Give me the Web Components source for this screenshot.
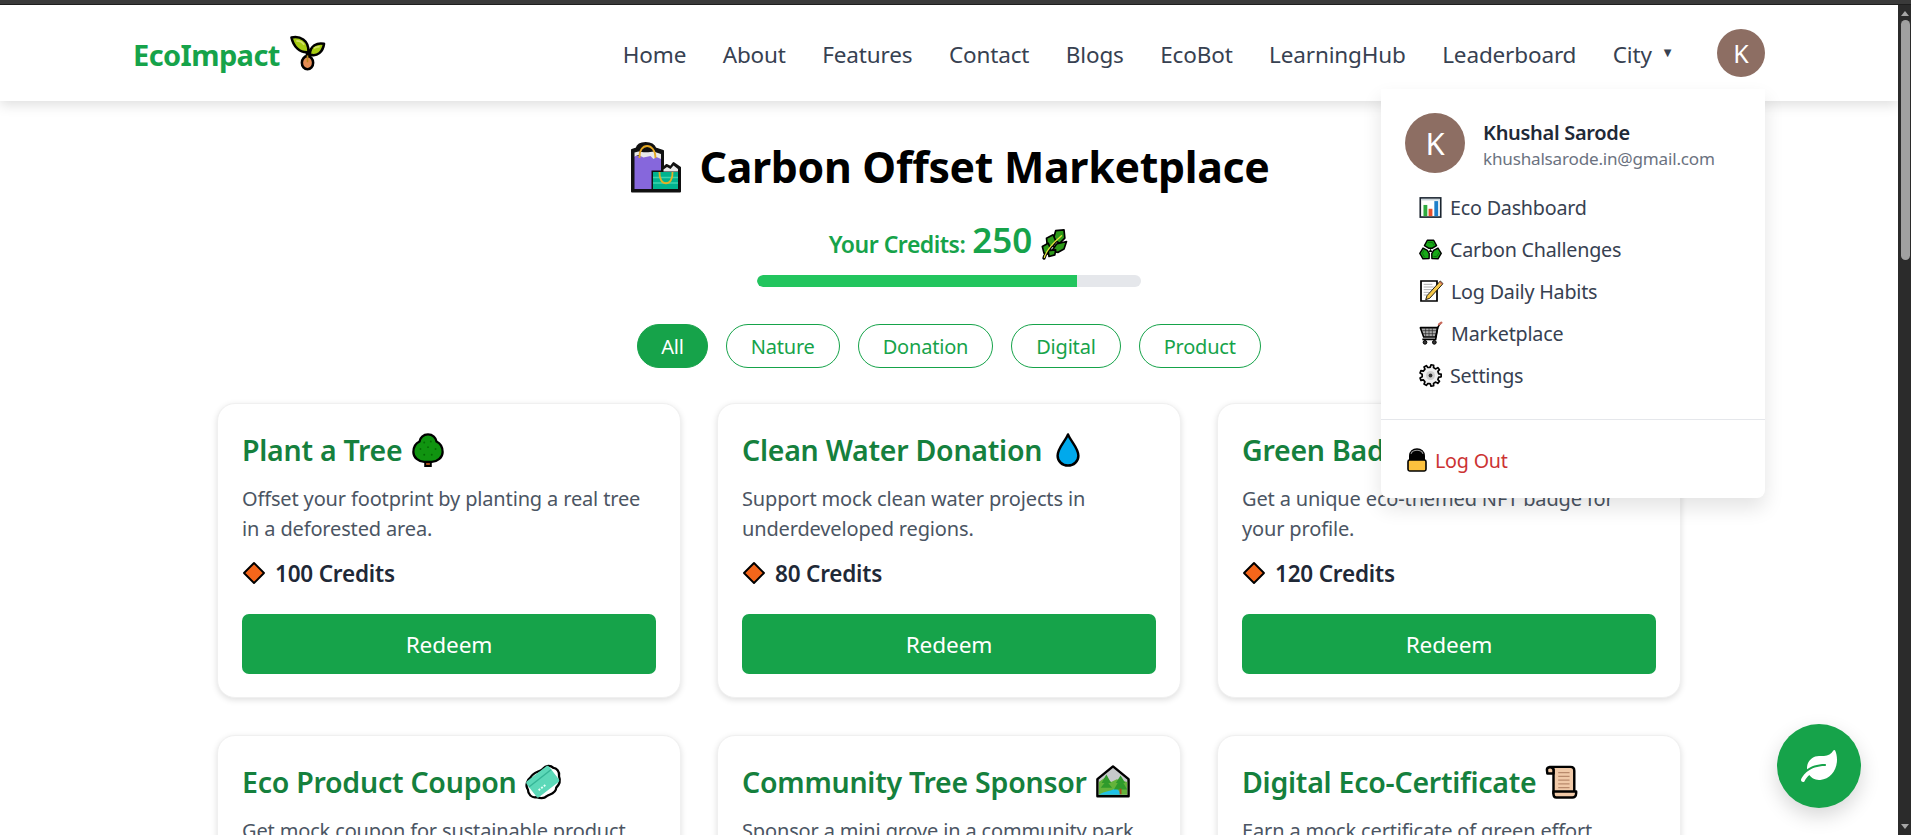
<!DOCTYPE html>
<html lang="en"><head><meta charset="utf-8"><title>EcoImpact</title>
<style>
html,body{margin:0;padding:0;height:100%;overflow:hidden;background:#fff;font-family:"Noto Sans","Open Sans",sans-serif}
</style></head><body>
<eco-app>
  <eco-nav></eco-nav>
  <eco-hero></eco-hero>
  <eco-grid>
    <eco-card icon="tree" credits="100 Credits"><span slot="title">Plant a Tree</span>Offset your footprint by planting a real tree in a deforested area.</eco-card>
    <eco-card icon="drop" credits="80 Credits"><span slot="title">Clean Water Donation</span>Support mock clean water projects in underdeveloped regions.</eco-card>
    <eco-card icon="medal" credits="120 Credits"><span slot="title">Green Badge NFT</span>Get a unique eco-themed NFT badge for your profile.</eco-card>
    <eco-card icon="coupon" credits="150 Credits"><span slot="title">Eco Product Coupon</span>Get mock coupon for sustainable product purchases from our partners.</eco-card>
    <eco-card icon="park" credits="200 Credits"><span slot="title">Community Tree Sponsor</span>Sponsor a mini grove in a community park near your locality.</eco-card>
    <eco-card icon="scroll" credits="60 Credits"><span slot="title">Digital Eco-Certificate</span>Earn a mock certificate of green effort towards climate action.</eco-card>
  </eco-grid>
  <eco-fab></eco-fab>
</eco-app>
<script>
function gearPath(){
  let p='';const n=9;
  for(let i=0;i<n;i++){
    const a=i/n*Math.PI*2,w=Math.PI*2/n;
    const pts=[[13,a-w*.5],[13.200,a-w*.28],[16.800,a-w*.18],[16.800,a+w*.18],[13.200,a+w*.28]];
    pts.forEach(([r,t],j)=>{p+=(i===0&&j===0?'M':'L')+(18+r*Math.cos(t)).toFixed(2)+' '+(18+r*Math.sin(t)).toFixed(2)});
  }
  return p+'Z';
}
const REC='M13 3.500H23L27.500 12L21 16H15L8.500 12Z';
const ICONS={
sprout:`<path d="M18 26C18 22 18.500 19 17 13M19 21C19 18 20 15 23 13" fill="none" stroke="#000" stroke-width="3.500"/><path d="M1.500 1.500C10 -.5 19.500 4 19 16.500C10 17.500 3.500 11 1.500 1.500Z" fill="#a6cb12" stroke="#000" stroke-width="2.600" stroke-linejoin="round"/><path d="M6.500 5C9.500 5 13 6.500 14.500 9" stroke="#d3e06a" stroke-width="1.700" fill="none"/><path d="M35 8C28 6.500 20.500 10 20.500 19C28 22 34 16 35 8Z" fill="#a6cb12" stroke="#000" stroke-width="2.600" stroke-linejoin="round"/><path d="M24.500 12.500C26.500 11.500 28.500 11 30.500 11" stroke="#d3e06a" stroke-width="1.700" fill="none"/><ellipse cx="18" cy="27.500" rx="5.800" ry="6.800" fill="#e58c55" stroke="#000" stroke-width="2.600"/><path d="M18 20v7" stroke="#b98a1e" stroke-width="1.600"/>`,
bags:`<path d="M8.500 56.500V15L13 13.500C15 6 29 6 32 13.500L39.500 16V33L43 30L47 32L50 28L56.500 32.500V56.500Z" fill="#111" stroke="#111" stroke-width="2" stroke-linejoin="round"/><path d="M11 54V21H37.500V54Z" fill="#8667dc"/><path d="M11 21.500V17.500L15 16.500C18 17.500 27 17.500 30 16.500L37.500 19V24L33 22L30 24L27 21L20 22.500L15 20Z" fill="#e9e9e9"/><path d="M16 23C15 7 32 7 32 23" fill="none" stroke="#e5a823" stroke-width="1.800"/><path d="M28 35.500H55V54.500H28Z" fill="#111"/><path d="M29.500 37H54.500V54H29.500Z" fill="#00b38e"/><path d="M29.500 42.500H54.500M29.500 48H54.500" stroke="#3fd3ae" stroke-width="1.500"/><path d="M36 37C35 52 50 52 49 37" fill="none" stroke="#e5b023" stroke-width="1.800"/><path d="M40 34.500L43.500 32L47 34L50 30.500L54.500 34V36.500H40Z" fill="#e9e9e9"/>`,
herb:`<path d="M6 35C8 28 14 19 27 8" fill="none" stroke="#000" stroke-width="4" stroke-linecap="round"/><g stroke="#000" stroke-width="2" stroke-linejoin="round" fill="#2d9a19"><path d="M20 2L30 1L31 11L25 17L17 13Z"/><path d="M9 11L17 7L20 14L17 21L10 21Z"/><path d="M21 18L33 15L30 24L23 28L15 27Z"/><path d="M4 21L11 17L14 24L10 30L6 29Z"/><path d="M11 26L20 25L19 31L12 33Z"/></g><path d="M6.500 34C8 28 14 19 27 8" fill="none" stroke="#e4e23c" stroke-width="1.600" stroke-linecap="round"/>`,
tree:`<path d="M15 29h6v6h-6z" fill="#a5501c" stroke="#000" stroke-width="2"/><path d="M18 1.500C23 1.500 26.500 5 27 9C31 11 33.500 15 33.500 20C33.500 26 28 30.500 22 30.500H14C8 30.500 2.500 26 2.500 20C2.500 15 5 11 9 9C9.500 5 13 1.500 18 1.500Z" fill="#109410" stroke="#000" stroke-width="2.400"/><g fill="#056b05"><circle cx="14" cy="10" r="1"/><circle cx="21" cy="9" r="1"/><circle cx="10" cy="17" r="1"/><circle cx="18" cy="15" r="1"/><circle cx="26" cy="17" r="1"/><circle cx="14" cy="23" r="1"/><circle cx="22" cy="23" r="1"/></g>`,
drop:`<path d="M18 1.500C21 9 29 16 29 24C29 30 24 34.500 18 34.500C12 34.500 7 30 7 24C7 16 15 9 18 1.500Z" fill="#00a9ec" stroke="#000" stroke-width="2.600" stroke-linejoin="round"/>`,
medal:`<path d="M11 2h14l-3 14h-8z" fill="#1b9e4b" stroke="#000" stroke-width="2"/><circle cx="18" cy="24" r="10" fill="#f5c02e" stroke="#000" stroke-width="2.400"/>`,
coupon:`<path d="M5 13C8 7 13 8 18 4C21 0 26 0 29 3C32 3 36 7 35 12C37 17 35 21 32 24C32 30 25 31 22 33C19 36 14 35 11 34C6 35 2 31 2 26C-1 22 1 16 5 13Z" fill="#fff" stroke="#000" stroke-width="2.400"/><g transform="rotate(-38 18 18)"><rect x="3" y="7" width="30" height="21" rx="2" fill="#5cd8b8"/><path d="M3 13h30" stroke="#35b596" stroke-width="1.500"/><path d="M9 22h10" stroke="#e3fff6" stroke-width="2" stroke-dasharray="2 1.500"/></g>`,
park:`<path d="M1.500 15L18 1.500L34.500 15V33H1.500Z" fill="#c6c9ca" stroke="#000" stroke-width="2.600" stroke-linejoin="round"/><path d="M3 31.500V18L10 13L16 18L22 15L33 18V31.500Z" fill="#64b33b"/><path d="M3 31.500C9 27 18 28 21 24C23 26 25 27 26 31.500Z" fill="#1fc1e8"/><path d="M11 10L16 19H13L17 24H5L9 19H6Z" fill="#2f9a2b"/><path d="M26 11L31 19H29L33 26H19L23 19H21Z" fill="#2f9a2b"/><path d="M26 25v6" stroke="#a5501c" stroke-width="2"/>`,
scroll:`<path d="M9 31V5C9 3 7 2 5 2H27C30 2 31 4 31 6V30" fill="#f0c9a8" stroke="#000" stroke-width="2.600" stroke-linejoin="round"/><path d="M2 5C2 2 8 1 9 5V9H2.500Z" fill="#f0c9a8" stroke="#000" stroke-width="2.600" stroke-linejoin="round"/><path d="M14 8H26M14 12H26M14 16H26M14 20H26M14 24H26" stroke="#b98a6c" stroke-width="1.400"/><path d="M9 28H33V30C33 33 31 34.500 29 34.500H12C10 34.500 9 33 9 31Z" fill="#f0c9a8" stroke="#000" stroke-width="2.600" stroke-linejoin="round"/>`,
diamond:`<path d="M18 3L33 18L18 33L3 18Z" fill="#f4661b" stroke="#000" stroke-width="2.800" stroke-linejoin="round"/>`,
chart:`<rect x="2" y="3" width="32" height="30" fill="#fff" stroke="#1b2530" stroke-width="2.600"/><rect x="3.500" y="4.500" width="29" height="2.500" fill="#c9d3d9"/><rect x="7" y="14" width="6" height="17.500" fill="#2fab3e"/><rect x="15" y="20" width="6" height="11.500" fill="#e9502c"/><rect x="24" y="8" width="6" height="23.500" fill="#1e7fc9"/>`,
recycle:`<g fill="#17a817" stroke="#000" stroke-width="2.200" stroke-linejoin="round"><path d="${REC}"/><path transform="rotate(120 18 20)" d="${REC}"/><path transform="rotate(240 18 20)" d="${REC}"/></g><path d="M18 17L21 22H15Z" fill="#000"/><g fill="none" stroke="#0c6f0c" stroke-width="1.300"><path d="M14 7H21L23.500 11.500"/><path transform="rotate(120 18 20)" d="M14 7H21L23.500 11.500"/><path transform="rotate(240 18 20)" d="M14 7H21L23.500 11.500"/></g>`,
memo:`<path d="M3 3H27V33H3Z" fill="#fff" stroke="#000" stroke-width="2.600"/><path d="M7 8H20M7 12H22M7 16H20M7 20H16M7 24H13" stroke="#a9a9a9" stroke-width="1.400"/><path d="M32 3L36 7L16 29L10 31L12 25Z" fill="#f5c84a" stroke="#000" stroke-width="1.300"/><path d="M31 4.500L35 8" stroke="#c9695b" stroke-width="2"/>`,
cart:`<path d="M2 10H28L25 24H7Z" fill="#a9a9a9" stroke="#000" stroke-width="2.400" stroke-linejoin="round"/><path d="M5 14.500H26.500M6 19H25.500M10 10V24M15 10V24M20 10V24" stroke="#222" stroke-width="1"/><path d="M5 27.500H25L28 10L31.500 4" fill="none" stroke="#000" stroke-width="2.400"/><path d="M30 5L33.500 2.500" stroke="#c9695b" stroke-width="3.500" stroke-linecap="round"/><circle cx="9" cy="32" r="2.800" fill="#333" stroke="#000" stroke-width="1.500"/><circle cx="23" cy="32" r="2.800" fill="#333" stroke="#000" stroke-width="1.500"/>`,
gear:`<path d="${gearPath()}" fill="#efefef" stroke="#000" stroke-width="2.600" stroke-linejoin="round"/><circle cx="18" cy="18" r="7" fill="#cfcfcf"/><circle cx="18" cy="18" r="3" fill="#333"/>`,
lock:`<path d="M4 19V12C4 5 9 1.500 15 1.500C21 1.500 26 5 26 12V19Z" fill="#000" stroke="#000" stroke-width="2"/><path d="M6 8.500C7.500 5 11 3.500 15 3.500C19 3.500 22.500 5 24 8.500" fill="none" stroke="#9a9a9a" stroke-width="1.600"/><rect x="1.500" y="18" width="27" height="16.500" rx="2.500" fill="#fcc13e" stroke="#000" stroke-width="2.400"/>`
};
function def(name,html){
  customElements.define(name,class extends HTMLElement{
    connectedCallback(){
      if(this.shadowRoot)return;
      this.attachShadow({mode:'open'}).innerHTML=typeof html==='function'?html(this):html;
    }
  });
}
def('eco-icon',el=>{
  const s=el.getAttribute('size')||24;
  return `<style>:host{display:inline-flex;flex:none;width:${s}px;height:${s}px}svg{display:block;width:100%;height:100%;overflow:visible}</style><svg viewBox="${el.getAttribute('vb')||'0 0 36 36'}" aria-hidden="true">${ICONS[el.getAttribute('name')]||''}</svg>`;
});
def('eco-app',`<style>
:host{display:grid;grid-template-columns:1fr 13px;grid-template-rows:5px 1fr;height:100vh;overflow:hidden;background:#fff}
.strip{grid-column:1/3;background:#3a3a3a;border-bottom:1px solid #1e1e1e}
.view{position:relative;overflow:hidden;min-width:0;min-height:0;background:#fff}
.sb{background:#2b2b2b;display:flex;flex-direction:column;align-items:center;justify-content:space-between}
.sb i{display:block;width:0;height:0;margin-top:6px;border:4px solid transparent;border-top:0;border-bottom:5px solid #a6a6a6}
.sb b{display:block;width:9px;height:240px;margin-top:4px;background:#a0a0a0;border-radius:5px;margin-right:-1px}
.sb u{display:block;width:0;height:0;margin-top:auto;margin-bottom:6px;border:4px solid transparent;border-bottom:0;border-top:5px solid #a6a6a6}
</style><div class="strip"></div><div class="view"><slot></slot></div><div class="sb"><i></i><b></b><u></u></div>`);
def('eco-nav',`<style>
:host{display:flex;position:relative;z-index:10;height:96px;box-sizing:border-box;padding:0 133px 0 133px;align-items:center;justify-content:space-between;background:#fff;box-shadow:0 4px 12px rgba(0,0,0,.13);font-family:"Noto Sans",sans-serif}
.logo{display:flex;align-items:center;gap:10px;color:#16a34a;font-weight:700;font-size:29px;letter-spacing:-.6px}
.logo span{padding-top:2px}
.links{display:flex;align-items:center;color:#374151;font-size:22.500px;letter-spacing:-.15px;gap:36.500px}
.links>span:not(.av){padding-top:2px}
.city{display:flex;align-items:center;gap:12px}
.caret{font:10px "DejaVu Sans",sans-serif;color:#374151;margin-top:-3px;letter-spacing:0}
.av{width:48px;height:48px;border-radius:50%;background:#8d6e63;color:#fff;display:flex;align-items:center;justify-content:center;font-size:25px;margin-left:9px;letter-spacing:0}
</style>
<div class="logo"><span>EcoImpact</span><eco-icon name="sprout" size="35"></eco-icon></div>
<div class="links"><span>Home</span><span>About</span><span>Features</span><span>Contact</span><span>Blogs</span><span>EcoBot</span><span>LearningHub</span><span>Leaderboard</span><span class="city">City<span class="caret">▼</span></span><span class="av">K</span></div>
<eco-menu></eco-menu>`);
def('eco-menu',`<style>
:host{position:absolute;top:84px;right:133px;width:384px;height:409px;box-sizing:border-box;background:#fff;border-radius:0 0 8px 8px;box-shadow:0 10px 20px rgba(0,0,0,.11);padding-top:24px;display:flex;flex-direction:column;font-family:"Noto Sans",sans-serif}
.head{display:flex;align-items:center;gap:18px;padding-left:24px;height:60px}
.av{width:60px;height:60px;border-radius:50%;background:#8d6e63;color:#fff;display:flex;align-items:center;justify-content:center;font-size:31px}
.who{padding-top:3px}
.name{font-size:20px;font-weight:600;color:#1f2937;letter-spacing:-.3px;line-height:28px}
.mail{font-size:17.100px;color:#6b7280;letter-spacing:-.2px;line-height:24px}
ul{list-style:none;margin:13px 0 0;padding:0 0 0 38px}
li{height:42px;display:flex;align-items:center;gap:8px;color:#374151;font-size:19.700px;letter-spacing:-.2px}
hr{border:0;border-top:1px solid #e5e7eb;margin:23px 0 19px;width:100%}
.out{height:42px;display:flex;align-items:center;gap:6px;padding-left:24px;color:#cc3333;font-size:19.700px;letter-spacing:-.2px}
</style>
<div class="head"><div class="av">K</div><div class="who"><div class="name">Khushal Sarode</div><div class="mail">khushalsarode.in@gmail.com</div></div></div>
<ul>
<li><eco-icon name="chart" size="23"></eco-icon>Eco Dashboard</li>
<li><eco-icon name="recycle" size="23"></eco-icon>Carbon Challenges</li>
<li><eco-icon name="memo" size="24"></eco-icon>Log Daily Habits</li>
<li><eco-icon name="cart" size="24"></eco-icon>Marketplace</li>
<li><eco-icon name="gear" size="23"></eco-icon>Settings</li>
</ul><hr>
<div class="out"><eco-icon name="lock" size="24" vb="0 0 30 36"></eco-icon>Log Out</div>`);
def('eco-hero',`<style>
:host{display:flex;flex-direction:column;align-items:center;padding-top:36px;font-family:"Noto Sans",sans-serif}
h1{margin:0 0 0 2px;height:60px;line-height:60px;font-size:42.800px;font-weight:700;color:#000;display:flex;align-items:center;gap:17px;letter-spacing:-.3px}
.cr{margin-top:23px;height:40px;line-height:40px;display:flex;align-items:baseline;color:#16a34a;font-weight:600;font-size:23px;letter-spacing:-.5px;gap:7px}
.cr b{font-size:35px;font-weight:600;letter-spacing:0}
.cr eco-icon{align-self:center;margin:8px 0 0 0}
.bar{margin-top:15px;width:384px;height:12px;background:#e5e7eb;border-radius:6px;overflow:hidden}
.bar i{display:block;width:83.300%;height:100%;background:#22c55e;border-radius:6px 0 0 6px}
.f{margin-top:37px;display:flex;gap:18px;height:44px}
</style>
<h1><eco-icon name="bags" size="52" vb="7 6 51 52"></eco-icon><span>Carbon Offset Marketplace</span></h1>
<div class="cr"><span>Your Credits:</span><b>250</b><eco-icon name="herb" size="30"></eco-icon></div>
<div class="bar"><i></i></div>
<div class="f"><eco-pill active>All</eco-pill><eco-pill>Nature</eco-pill><eco-pill>Donation</eco-pill><eco-pill>Digital</eco-pill><eco-pill>Product</eco-pill></div>`);
def('eco-pill',el=>{const a=el.hasAttribute('active');return `<style>
:host{display:flex;align-items:center;box-sizing:border-box;height:44px;padding:1px ${a?23:24}px 0;border-radius:22px;border:1px solid #16a34a;font-size:20px;letter-spacing:-.2px;color:${a?'#fff':'#16a34a'};background:${a?'#16a34a':'#fff'}}
</style><slot></slot>`});
def('eco-grid',`<style>
:host{display:grid;grid-template-columns:repeat(3,464px);gap:37px 36px;justify-content:start;padding-left:217px;margin-top:35px;font-family:"Noto Sans",sans-serif}
</style><slot></slot>`);
def('eco-card',el=>`<style>
:host{display:block;box-sizing:border-box;height:295px;padding:24px;background:#fff;border:1px solid #f0f0f0;border-radius:18px;box-shadow:0 2px 6px rgba(0,0,0,.13)}
.t{height:44px;display:flex;align-items:center;gap:9px;color:#15803d;font-weight:600;font-size:28.500px;letter-spacing:-.25px;white-space:nowrap}
.d{margin-top:12px;height:60px;line-height:30px;color:#4b5563;font-size:20px;letter-spacing:-.15px}
.c{margin-top:14px;height:30px;display:flex;align-items:center;gap:9px;color:#1f2937;font-weight:600;font-size:22.500px;letter-spacing:-.2px}
button{display:block;margin-top:26px;width:100%;height:60px;border:0;border-radius:7px;background:#16a34a;color:#fff;font:400 22.600px "Noto Sans",sans-serif;letter-spacing:-.1px}
</style>
<div class="t"><slot name="title"></slot><eco-icon name="${el.getAttribute('icon')}" size="34"></eco-icon></div>
<div class="d"><slot></slot></div>
<div class="c"><eco-icon name="diamond" size="24"></eco-icon><span>${el.getAttribute('credits')}</span></div>
<button type="button">Redeem</button>`);
def('eco-fab',`<style>
:host{position:absolute;z-index:20;right:37px;bottom:27px;width:84px;height:84px;border-radius:50%;background:#16a34a;display:flex;align-items:center;justify-content:center;box-shadow:0 8px 20px rgba(0,0,0,.16)}
svg{width:36px;height:32px;fill:#fff}
</style><svg viewBox="0 0 576 512" aria-hidden="true"><path d="M546.2 9.7c-5.6-12.5-21.6-13-28.3-1.2C486.9 62.4 431.4 96 368 96h-80C182 96 96 182 96 288c0 7 .8 13.7 1.5 20.5C161.3 262.8 253.4 224 384 224c8.8 0 16 7.2 16 16s-7.2 16-16 16C132.6 256 26 410.1 2.4 468c-6.6 16.3 1.2 34.9 17.5 41.6 16.4 6.8 35-1.1 41.8-17.3 1.5-3.6 20.9-47.9 71.9-90.6 32.4 43.9 94 85.8 174.9 77.2C465.5 467.5 576 326.7 576 154.3c0-50.2-10.8-102.2-29.8-144.6z"/></svg>`);
</script>
</body></html>
